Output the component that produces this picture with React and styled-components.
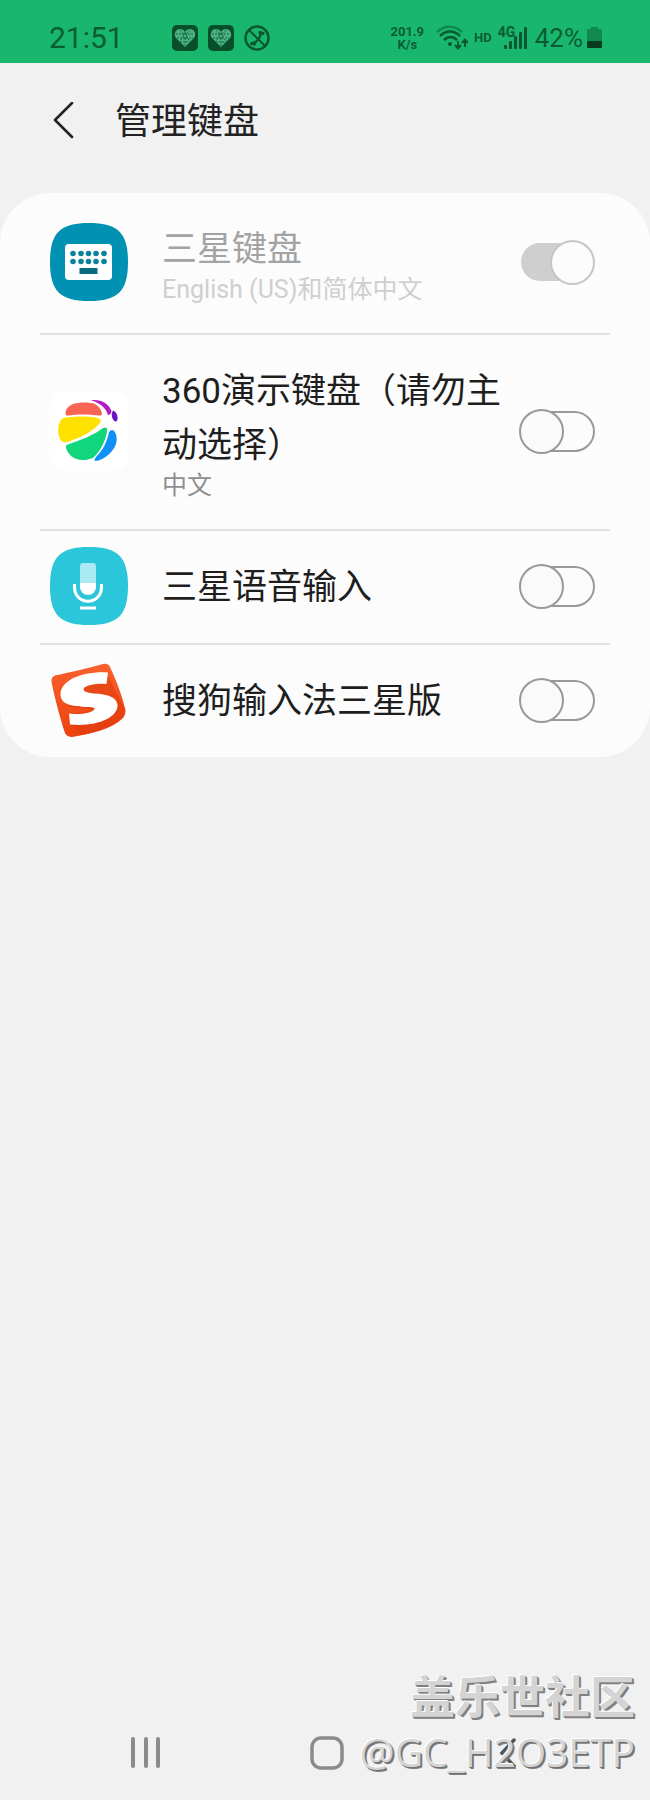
import React, { useState } from 'react';
import styled, { createGlobalStyle } from 'styled-components';

const GlobalStyle = createGlobalStyle`
  *,
  *::before,
  *::after {
    box-sizing: border-box;
  }

  body {
    margin: 0;
    background-color: #f1f1f1;
    font-family: Roboto, 'Noto Sans CJK SC', sans-serif;
  }
`

const Screen = styled.div`
  position: relative;
  display: flex;
  flex-direction: column;
  min-height: 100vh;
`

/* Status bar */

const StatusBar = styled.header`
  display: flex;
  align-items: center;
  height: 63px;
  padding: 12px 48px 0 49px;
  background-color: #19b76e;
  color: #0b5c33;
`

const Clock = styled.time`
  font-size: 30px;
  line-height: 32px;
`

const Notifications = styled.div`
  display: flex;
  gap: 10px;
  margin-left: 48px;
  flex: 1;
`

const Indicators = styled.div`
  display: flex;
  align-items: center;
`

const NetSpeed = styled.div`
  margin-right: 12px;
  font-size: 13px;
  line-height: 13px;
  font-weight: 700;
  text-align: center;
`

const NetSpeedLine = styled.div``

const HdLabel = styled.span`
  margin: 0 6px;
  font-size: 13px;
  line-height: 16px;
  font-weight: 700;
`

const Signal = styled.div`
  display: flex;
  position: relative;
`

const SignalType = styled.span`
  position: absolute;
  left: 0;
  top: 0;
  font-size: 14px;
  line-height: 14px;
  font-weight: 700;
`

const BatteryText = styled.span`
  margin: 0 4px 0 8px;
  font-size: 26px;
  line-height: 32px;
`

/* Header */

const Toolbar = styled.div`
  display: flex;
  align-items: center;
  gap: 34px;
  height: 130px;
  padding: 0 45px 12px;
`

const IconButton = styled.button`
  display: flex;
  align-items: center;
  justify-content: center;
  padding: 0;
  border: none;
  background: none;
  color: inherit;
  cursor: pointer;
`

const Title = styled.h1`
  margin: 0;
  color: #222;
  font-size: 36px;
  line-height: 44px;
  font-weight: 400;
`

/* List */

const Card = styled.ul`
  margin: 0;
  padding: 0 40px;
  list-style: none;
  background-color: #fcfcfc;
  border-radius: 50px;
`

const Row = styled.li`
  display: flex;
  align-items: center;
  padding: 14px 15px 16px 9px;

  & + & {
    border-top: 2px solid #e2e2e2;
  }
`

const RowLabel = styled.label`
  flex: 1;
  min-width: 0;
  padding: 16px 0 12px;
  margin: 0 8px 0 33px;
`

const RowTitle = styled.span`
  display: block;
  color: ${(props) => (props.$disabled ? '#a3a3a3' : '#1e1e1e')};
  font-size: 35px;
  line-height: 54px;
`

const RowNote = styled.span`
  display: block;
  margin-bottom: 2px;
  color: ${(props) => (props.$disabled ? '#cfcfcf' : '#8e8e8e')};
  font-size: 25px;
  line-height: 26px;
`

/* Toggle */

const Toggle = styled.input.attrs({ type: 'checkbox' })`
  appearance: none;
  flex: none;
  display: grid;
  align-items: center;
  width: 76px;
  height: 45px;
  margin: 0;
  cursor: pointer;

  &::before {
    content: '';
    grid-area: 1 / 1;
    height: 41px;
    margin-left: 4px;
    border: 2px solid #999;
    border-radius: 21px;
  }

  &::after {
    content: '';
    grid-area: 1 / 1;
    justify-self: start;
    width: 45px;
    height: 45px;
    border: 2px solid #999;
    border-radius: 50%;
    background-color: #fafafa;
  }

  &:checked::before {
    height: 38px;
    margin: 0 4px 0 2px;
    border: none;
    background-color: #999;
  }

  &:checked::after {
    justify-self: end;
  }

  &:disabled::before {
    background-color: #cfcfcf;
  }

  &:disabled::after {
    border-color: #c6c6c6;
    background-color: #fcfcfc;
  }
`

/* Bottom navigation */

const NavBar = styled.nav`
  display: flex;
  margin-top: auto;
  height: 94px;
  padding: 0 52px 0 56px;
  color: #8b8b8b;

  ${IconButton} {
    flex: 1;
  }
`

const Watermark = styled.div`
  position: absolute;
  right: 15px;
  bottom: 20px;
  text-align: right;
  color: #d4d4d4;
  pointer-events: none;
`

const Community = styled.div`
  font-family: 'Noto Sans CJK SC', sans-serif;
  font-size: 45px;
  line-height: 58px;
  font-weight: 700;
  text-shadow: -1px -1px 0 #fff, 1px 1px 0 #808080, 2px 2px 0 #808080;
`

const UserName = styled.div`
  font-family: 'Open Sans', sans-serif;
  font-size: 39px;
  line-height: 56px;
  text-shadow: -1px -1px 0 #fff, 1px 1px 0 #707070, 2px 2px 0 #808080;
`

/* Icons */

const SQUIRCLE = 'M40 1 C69 1 79 11 79 40 C79 69 69 79 40 79 C11 79 1 69 1 40 C1 11 11 1 40 1 Z'

const HeartIcon = () => (
  <svg width="26" height="26" viewBox="0 0 26 26" aria-hidden="true">
    <rect width="26" height="26" rx="5" fill="#064f2a" />
    <path d="M13 22 L4 13 C1 9 4 4 8 4 C10 4 12 5 13 7 C14 5 16 4 18 4 C22 4 25 9 22 13 Z" fill="#4db283" />
    <path d="M4 9 H22 M5 13 H21 M8 17 H18 M8 5 L18 16 M18 5 L8 16 M13 7 V21" stroke="#146b40" strokeWidth="1" strokeDasharray="2 1" />
    <circle cx="13" cy="11" r="2" fill="#4db283" stroke="#146b40" />
  </svg>
)

const NoCallIcon = () => (
  <svg width="26" height="26" viewBox="0 0 26 26" fill="none" stroke="#0a5730" aria-hidden="true">
    <circle cx="13" cy="13" r="11.5" strokeWidth="2.4" />
    <path d="M5 5 L21 21" strokeWidth="2.2" />
    <path d="M9 18 C13 17 16 13 17 8" strokeWidth="2.4" />
    <path d="M7.5 18.5 L10.5 19 M16 7.5 L19 8.5" strokeWidth="3" strokeLinecap="round" />
  </svg>
)

const WifiIcon = () => (
  <svg width="32" height="26" viewBox="0 0 32 26" fill="none" stroke="#0a5730" strokeWidth="2.5" aria-hidden="true">
    <path d="M1 7 C8 0 19 0 26 7" stroke="#0e8a50" />
    <path d="M4 11 C10 5 18 5 24 11" />
    <path d="M8 15 C12 11 17 11 21 15" />
    <circle cx="14" cy="19" r="2" fill="#0a5730" stroke="none" />
    <path d="M22 16 V23 M19 20 L22 23.500 L25 20 M29 22 V15 M26 18 L29 14.500 L32 18" strokeWidth="2" />
  </svg>
)

const SignalIcon = () => (
  <svg width="29" height="25" viewBox="0 0 29 25" fill="#0a5730" aria-hidden="true">
    <rect x="6" y="20" width="3" height="4" rx="1" />
    <rect x="11" y="16" width="3" height="8" rx="1" />
    <rect x="16" y="11" width="3" height="13" rx="1" />
    <rect x="21" y="7" width="3" height="17" rx="1" />
    <rect x="26" y="2" width="3" height="22" rx="1" />
  </svg>
)

const BatteryIcon = () => (
  <svg width="15" height="22" viewBox="0 0 15 22" aria-hidden="true">
    <path d="M4 0 H11 V2 H14 Q15 2 15 3 V14 H0 V3 Q0 2 1 2 H4 Z" fill="#118850" />
    <path d="M0 14 H15 V20 Q15 21 14 21 H1 Q0 21 0 20 Z" fill="#063d20" />
  </svg>
)

const SamsungKeyboardIcon = () => (
  <svg width="80" height="80" viewBox="0 0 80 80" aria-hidden="true">
    <path d={SQUIRCLE} fill="#0091b3" />
    <rect x="16" y="22" width="47" height="36" rx="4" fill="#fff" />
    {[24, 32, 39.5, 47, 55].map((x) => (
      <g key={x} fill="#0a8299">
        <circle cx={x} cy="31.500" r="2.800" />
        <circle cx={x} cy="39.500" r="2.800" />
      </g>
    ))}
    <rect x="30.500" y="46" width="18" height="6" fill="#086b80" />
  </svg>
)

const Demo360Icon = () => (
  <svg width="80" height="80" viewBox="0 0 80 80" aria-hidden="true">
    <rect width="80" height="80" rx="16" fill="#fff" />
    <path d="M17 24 C15 20 19 15 24 13 C31 11 41 11 46 13 C50 15 53 20 53 23 Q53 25 50 24.500 C40 23 28 23 19 24.500 Q17 25 17 24 Z" fill="#f96453" />
    <path d="M42 9.300 C52 8 60 13 62.500 20 Q62 24 59 24 C57 17 51 12 42 9.300 Z" fill="#b51bc4" />
    <path d="M64 19.500 C68 21 70 27 67.500 30.500 C64 31 61 24 64 19.500 Z" fill="#6d12c4" />
    <path d="M15 27 C26 25 40 25 49 27 Q54 29 50 33 C42 42 30 47 18 51 Q13 52 11 48 C8 41 9 33 12 29 Q13 27 15 27 Z" fill="#ffe100" />
    <path d="M54 37 Q59 35 58 41 C56 51 51 61 44 67 C36 70 28 70 22 65 Q18 61 17 57 Q16 54 20 53 C32 49 45 44 54 37 Z" fill="#12d67b" />
    <path d="M60 41 Q63 37 66 41 C69 47 68 54 63 60 C59 65 53 69 47 70 Q44 70 47 66 C54 59 58 51 60 41 Z" fill="#0d91f7" />
  </svg>
)

const VoiceIcon = () => (
  <svg width="80" height="80" viewBox="0 0 80 80" fill="none" aria-hidden="true">
    <path d={SQUIRCLE} fill="#2bc6da" />
    <path d="M31 38 V20 Q31 17 34 17 H44 Q47 17 47 20 V38 Z" fill="#a9e9f1" />
    <path d="M31 37 H47 V41 A8 8 0 0 1 31 41 Z" fill="#fff" />
    <path d="M25.500 38 V41 C25.500 60 52.500 60 52.500 41 V38" stroke="#fff" strokeWidth="3" />
    <path d="M31 62 H47" stroke="#fff" strokeWidth="3" />
  </svg>
)

const SogouIcon = () => (
  <svg width="80" height="80" viewBox="0 0 80 80" aria-hidden="true">
    <defs>
      <linearGradient id="sogou-fill" x1="0" y1="0" x2="0" y2="1">
        <stop offset="0" stopColor="#f9612d" />
        <stop offset="1" stopColor="#ec430e" />
      </linearGradient>
    </defs>
    <path d="M6 15.500 C22 12 40 8 54 4 Q59 3 61 7 C67 20 73 35 76.500 50 Q77 54 74 58 C62 69 42 74 23 77 Q18 77 16 73 C11 58 6 39 2.500 22 Q2 17 6 15.500 Z" fill="url(#sogou-fill)" />
    <path d="M12 39 L20 47 L47 50 L20 55 L21 64 L33 75 C51 72 66 67 75 57 L76.500 50 L59 16 Z" fill="#d9360a" opacity="0.450" />
    <path d="M59 12.500 L57.500 24 C48 23 38 25 35 28 C33 31 38 33 45 33.500 C58 34 68 37 68.500 45 C69 58 47 67 21 64.500 L20 53.500 C32 55 42 53 45 50 C47 47 43 47 36 47 C24 46 12 45 11.500 35 C11 20 34 11 59 12.500 Z" fill="#fff" />
  </svg>
)

const keyboards = [
  { id: 'samsung', title: '三星键盘', note: 'English (US)和简体中文', icon: <SamsungKeyboardIcon />, disabled: true },
  { id: 'demo360', title: '360演示键盘（请勿主动选择）', note: '中文', icon: <Demo360Icon /> },
  { id: 'voice', title: '三星语音输入', icon: <VoiceIcon /> },
  { id: 'sogou', title: '搜狗输入法三星版', icon: <SogouIcon /> },
]

function App() {

  const [enabled, setEnabled] = useState({ samsung: true })

  const toggleKeyboard = (id) => {
    setEnabled({ ...enabled, [id]: !enabled[id] })
  }

  return (
    <Screen>
      <GlobalStyle />
      <StatusBar>
        <Clock>21:51</Clock>
        <Notifications>
          <HeartIcon />
          <HeartIcon />
          <NoCallIcon />
        </Notifications>
        <Indicators>
          <NetSpeed>
            <NetSpeedLine>201.9</NetSpeedLine>
            <NetSpeedLine>K/s</NetSpeedLine>
          </NetSpeed>
          <WifiIcon />
          <HdLabel>HD</HdLabel>
          <Signal>
            <SignalIcon />
            <SignalType>4G</SignalType>
          </Signal>
          <BatteryText>42%</BatteryText>
          <BatteryIcon />
        </Indicators>
      </StatusBar>

      <Toolbar>
        <IconButton aria-label="返回">
          <svg width="36" height="40" viewBox="0 0 36 40" fill="none" stroke="#222" strokeWidth="2.600" strokeLinecap="round" strokeLinejoin="round">
            <path d="M27 1 L10 18 L27 35" />
          </svg>
        </IconButton>
        <Title>管理键盘</Title>
      </Toolbar>

      <Card>
        {keyboards.map((item) => (
          <Row key={item.id}>
            {item.icon}
            <RowLabel htmlFor={item.id}>
              <RowTitle $disabled={item.disabled}>{item.title}</RowTitle>
              {item.note && <RowNote $disabled={item.disabled}>{item.note}</RowNote>}
            </RowLabel>
            <Toggle
              id={item.id}
              checked={!!enabled[item.id]}
              disabled={item.disabled}
              onChange={() => toggleKeyboard(item.id)}
            />
          </Row>
        ))}
      </Card>

      <NavBar>
        <IconButton aria-label="最近">
          <svg width="30" height="32" viewBox="0 0 30 32" fill="currentColor">
            <rect x="0" y="0" width="4" height="31" rx="2" />
            <rect x="13" y="0" width="4" height="31" rx="2" />
            <rect x="25" y="0" width="4" height="31" rx="2" />
          </svg>
        </IconButton>
        <IconButton aria-label="主页">
          <svg width="34" height="34" viewBox="0 0 34 34" fill="none" stroke="currentColor" strokeWidth="3.500">
            <rect x="2" y="2" width="30" height="30" rx="9" />
          </svg>
        </IconButton>
        <IconButton aria-label="后退">
          <svg width="18" height="32" viewBox="0 0 18 32" fill="none" stroke="#555" strokeWidth="3.500" strokeLinecap="round">
            <path d="M15 3 L3 16 L15 29" />
          </svg>
        </IconButton>
      </NavBar>

      <Watermark>
        <Community>盖乐世社区</Community>
        <UserName>@GC_H2O3ETP</UserName>
      </Watermark>
    </Screen>
  )
}

export default App;
